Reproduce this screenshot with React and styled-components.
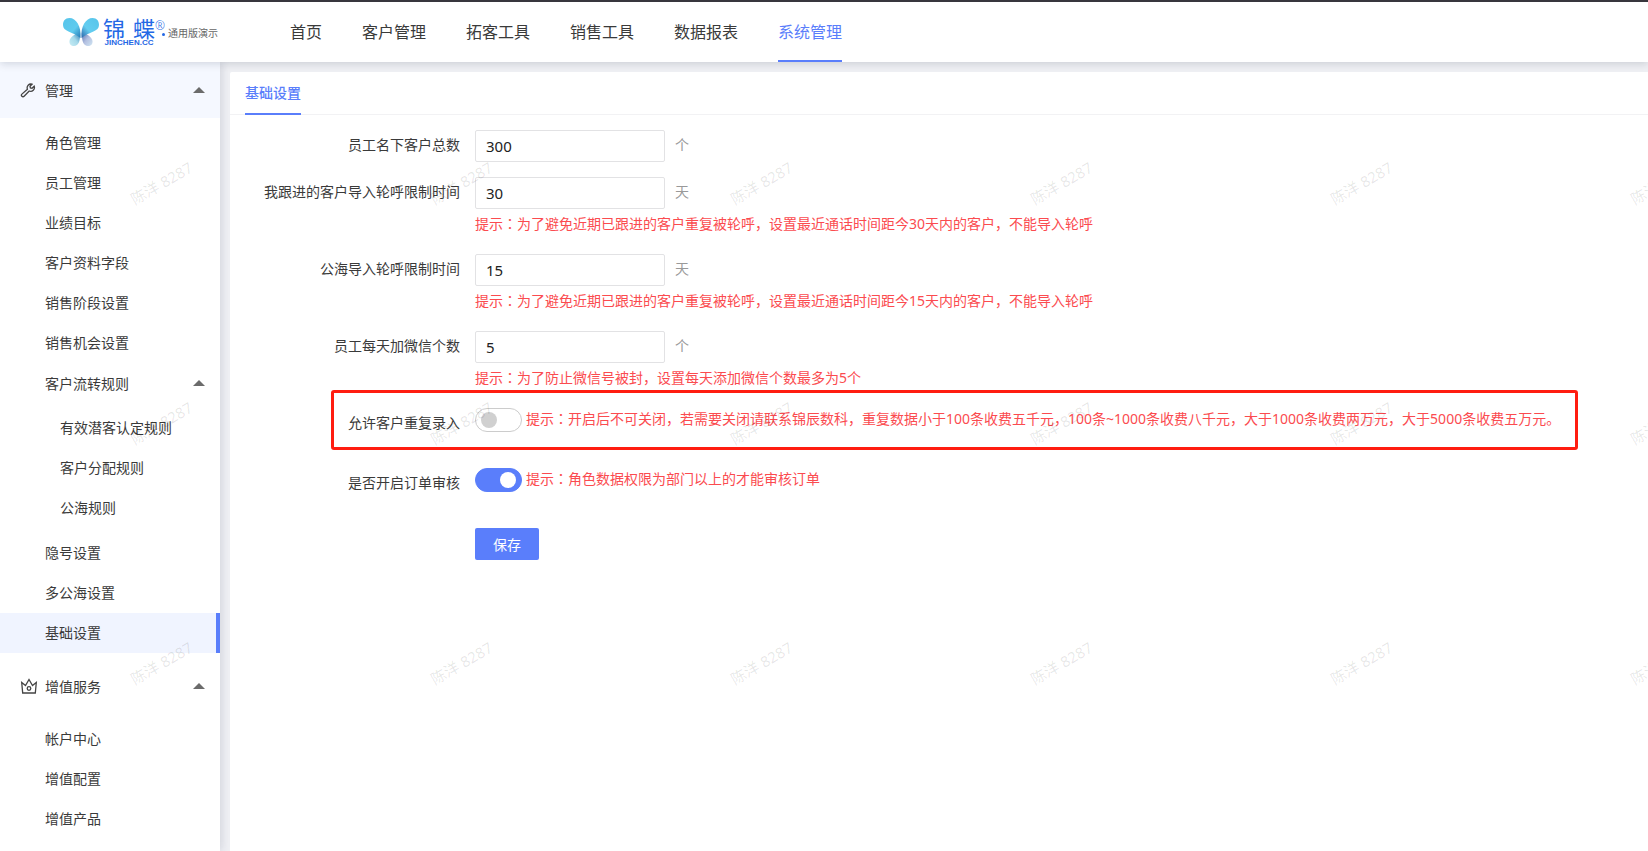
import React, { useState } from "react";
import styled, { createGlobalStyle } from "styled-components";

const menu = ["首页", "客户管理", "拓客工具", "销售工具", "数据报表", "系统管理"];

const flowRules = ["有效潜客认定规则", "客户分配规则", "公海规则"];

const manageTop = [
  "角色管理",
  "员工管理",
  "业绩目标",
  "客户资料字段",
  "销售阶段设置",
  "销售机会设置",
];

const manageBottom = ["隐号设置", "多公海设置", "基础设置"];

const services = ["帐户中心", "增值配置", "增值产品"];

const fields = [
  { id: "total", label: "员工名下客户总数", value: "300", unit: "个" },
  {
    id: "followDays",
    label: "我跟进的客户导入轮呼限制时间",
    value: "30",
    unit: "天",
    tip: "为了避免近期已跟进的客户重复被轮呼，设置最近通话时间距今30天内的客户，不能导入轮呼",
  },
  {
    id: "seaDays",
    label: "公海导入轮呼限制时间",
    value: "15",
    unit: "天",
    tip: "为了避免近期已跟进的客户重复被轮呼，设置最近通话时间距今15天内的客户，不能导入轮呼",
  },
  {
    id: "wechat",
    label: "员工每天加微信个数",
    value: "5",
    unit: "个",
    tip: "为了防止微信号被封，设置每天添加微信个数最多为5个",
  },
];

function Butterfly() {
  return (
    <svg width="36" height="28" viewBox="0 0 36 28" aria-hidden="true">
      <defs>
        <linearGradient id="wing" x1="0" y1="0" x2="1" y2="1">
          <stop offset="0" stopColor="#56c4ea" />
          <stop offset="0.6" stopColor="#5fcbee" />
          <stop offset="1" stopColor="#2277b5" />
        </linearGradient>
        <linearGradient id="wingRight" x1="1" y1="0" x2="0" y2="1">
          <stop offset="0" stopColor="#56c4ea" />
          <stop offset="0.6" stopColor="#63cdf0" />
          <stop offset="1" stopColor="#2a62a8" />
        </linearGradient>
        <linearGradient id="tail" x1="1" y1="0" x2="0" y2="1">
          <stop offset="0" stopColor="#2478b4" />
          <stop offset="0.5" stopColor="#a5d9ea" />
          <stop offset="1" stopColor="#c9edf5" />
        </linearGradient>
        <linearGradient id="tailRight" x1="0" y1="0" x2="1" y2="1">
          <stop offset="0" stopColor="#4a6cae" />
          <stop offset="0.5" stopColor="#b3bfe0" />
          <stop offset="1" stopColor="#d0e6f3" />
        </linearGradient>
      </defs>
      <path d="M17 14C12 16 7 19 6.500 23c-.4 3 1.500 5 4.500 5 4.500 0 6.500-5 6-14z" fill="url(#tail)" />
      <path d="M19 14c5 2 10 5 10.500 9 .4 3-1.500 5-4.500 5-4.500 0-6.500-5-6-14z" fill="url(#tailRight)" />
      <path d="M17.500 20C18.500 8 13 0 6.500 0 2 0 0 3 0 7c0 7 9 6 17.500 13z" fill="url(#wing)" />
      <path d="M18.500 20C17.500 8 23 0 29.500 0 34 0 36 3 36 7c0 7-9 6-17.500 13z" fill="url(#wingRight)" />
    </svg>
  );
}

function Wrench() {
  return (
    <svg
      width="16"
      height="16"
      viewBox="0 0 16 16"
      fill="none"
      stroke="#444"
      strokeWidth="1.3"
      aria-hidden="true"
    >
      <path d="M12 2.200a3.800 3.800 0 0 0-4.600 5L1.900 12.100a1.500 1.500 0 0 0 2.200 2.200L9.200 9a3.800 3.800 0 0 0 5-4.800L12 6.300l-1.600-.4-.4-1.700z" />
    </svg>
  );
}

function Crown() {
  return (
    <svg
      width="18"
      height="16"
      viewBox="0 0 18 16"
      fill="none"
      stroke="#444"
      strokeWidth="1.3"
      aria-hidden="true"
    >
      <path d="M1.700 4.500 2.700 15h12.600l1-10.500-3.800 3L9 1.500l-3.500 6z" />
      <circle cx="9" cy="10.500" r="1.800" />
    </svg>
  );
}

function Group({ icon, title, tinted, children }) {
  return (
    <>
      <GroupTitle type="button" $tinted={tinted}>
        <IconBox>{icon}</IconBox>
        <span>{title}</span>
        <Arrow />
      </GroupTitle>
      <List>{children}</List>
    </>
  );
}

function Items({ names, active }) {
  return names.map((name) => (
    <li key={name}>
      <Item href="#" $active={name === active}>
        {name}
      </Item>
    </li>
  ));
}

function Hint({ children }) {
  return (
    <>
      提示<Colon>：</Colon>
      {children}
    </>
  );
}

export default function App() {
  const [values, setValues] = useState(
    Object.fromEntries(fields.map((f) => [f.id, f.value]))
  );
  const [repeat, setRepeat] = useState(false);
  const [audit, setAudit] = useState(true);

  return (
    <Page>
      <GlobalStyle />
      <Header>
        <Logo href="#">
          <Butterfly />
          <Brand>
            <BrandName>
              <span>锦</span>
              <span>蝶</span>
            </BrandName>
            <BrandSite>JINCHEN.CC</BrandSite>
          </Brand>
          <Mark>
            <span>®</span>
            <Dot />
          </Mark>
          <Edition>通用版演示</Edition>
        </Logo>
        <Nav>
          {menu.map((name) => (
            <NavLink key={name} href="#" $active={name === "系统管理"}>
              {name}
            </NavLink>
          ))}
        </Nav>
      </Header>
      <Body>
        <Sidebar>
          <Group icon={<Wrench />} title="管理" tinted>
            <Items names={manageTop} />
            <li>
              <SubTitle type="button">
                <span>客户流转规则</span>
                <Arrow />
              </SubTitle>
              <SubList>
                <Items names={flowRules} />
              </SubList>
            </li>
            <Items names={manageBottom} active="基础设置" />
          </Group>
          <Group icon={<Crown />} title="增值服务">
            <Items names={services} />
          </Group>
        </Sidebar>
        <Main>
          <Card>
            <Tabs>
              <Tab href="#">基础设置</Tab>
            </Tabs>
            <Form onSubmit={(e) => e.preventDefault()}>
              {fields.map((f) => (
                <Row key={f.id}>
                  <Label htmlFor={f.id}>{f.label}</Label>
                  <div>
                    <Control>
                      <Input
                        id={f.id}
                        value={values[f.id]}
                        onChange={(e) =>
                          setValues({ ...values, [f.id]: e.target.value })
                        }
                      />
                      <Unit>{f.unit}</Unit>
                    </Control>
                    {f.tip && (
                      <Tip>
                        <Hint>{f.tip}</Hint>
                      </Tip>
                    )}
                  </div>
                </Row>
              ))}
              <SwitchRow>
                <Highlight />
                <Label htmlFor="repeat">允许客户重复录入</Label>
                <SwitchLine>
                  <Switch
                    id="repeat"
                    type="checkbox"
                    checked={repeat}
                    onChange={(e) => setRepeat(e.target.checked)}
                  />
                  <SwitchTip>
                    <Hint>
                      开启后不可关闭，若需要关闭请联系锦辰数科，重复数据小于100条收费五千元，100条~1000条收费八千元，大于1000条收费两万元，大于5000条收费五万元。
                    </Hint>
                  </SwitchTip>
                </SwitchLine>
              </SwitchRow>
              <SwitchRow>
                <Label htmlFor="audit">是否开启订单审核</Label>
                <SwitchLine>
                  <Switch
                    id="audit"
                    type="checkbox"
                    checked={audit}
                    onChange={(e) => setAudit(e.target.checked)}
                  />
                  <SwitchTip>
                    <Hint>角色数据权限为部门以上的才能审核订单</Hint>
                  </SwitchTip>
                </SwitchLine>
              </SwitchRow>
              <Row>
                <span />
                <Save type="submit">保存</Save>
              </Row>
            </Form>
          </Card>
        </Main>
      </Body>
      <Watermarks aria-hidden="true">
        {Array.from({ length: 18 }, (_, i) => (
          <Watermark key={i}>陈洋 8287</Watermark>
        ))}
      </Watermarks>
    </Page>
  );
}

const GlobalStyle = createGlobalStyle`
  * {
    box-sizing: border-box;
  }
  body {
    margin: 0;
    background: #eff0f4;
    color: #3a3a3a;
    font-family: "Noto Sans", "Noto Sans CJK SC", sans-serif;
    font-size: 14px;
  }
  a {
    color: inherit;
    text-decoration: none;
  }
  button,
  input {
    margin: 0;
    font: inherit;
    color: inherit;
  }
  ul {
    margin: 0;
    padding: 0;
    list-style: none;
  }
`;

const Page = styled.div`
  position: relative;
  display: flex;
  flex-direction: column;
  min-height: 100vh;
  overflow: hidden;
`;

const Header = styled.header`
  position: relative;
  z-index: 2;
  display: flex;
  height: 62px;
  border-top: 2px solid #38363d;
  background: #fff;
  box-shadow: 0 2px 8px rgba(0, 21, 41, 0.15);
`;

const Logo = styled.a`
  display: flex;
  align-items: center;
  width: 290px;
  padding-left: 63px;
`;

const Brand = styled.span`
  display: flex;
  flex-direction: column;
  width: 52px;
  margin-left: 4px;
  color: #2468e5;
`;

const BrandName = styled.span`
  display: flex;
  justify-content: space-between;
  font-size: 22px;
  line-height: 22px;
`;

const BrandSite = styled.span`
  font-family: "Liberation Sans", sans-serif;
  font-size: 8px;
  font-weight: 700;
  line-height: 8px;
  text-align: center;
`;

const Mark = styled.span`
  display: flex;
  flex-direction: column;
  width: 10px;
  padding-bottom: 10px;
  color: #2468e5;
  font-size: 12px;
  font-weight: 300;
  line-height: 14px;
`;

const Dot = styled.i`
  align-self: flex-end;
  width: 3px;
  height: 3px;
  border-radius: 50%;
  background: currentColor;
`;

const Edition = styled.span`
  margin-left: 3px;
  color: #666;
  font-size: 10px;
  white-space: nowrap;
`;

const Nav = styled.nav`
  display: flex;
  gap: 40px;
`;

const NavLink = styled.a`
  border-bottom: 2px solid ${(p) => (p.$active ? "#5a7efb" : "transparent")};
  color: ${(p) => (p.$active ? "#5a7efb" : "#3a3a3a")};
  font-size: 16px;
  line-height: 60px;
  white-space: nowrap;
`;

const Body = styled.div`
  display: flex;
  flex: 1;
`;

const Sidebar = styled.aside`
  position: relative;
  z-index: 1;
  flex: 0 0 220px;
  background: #fff;
  box-shadow: 2px 0 8px rgba(29, 35, 80, 0.13);
`;

const GroupTitle = styled.button`
  display: flex;
  align-items: center;
  width: 100%;
  height: 56px;
  padding: 0 15px 0 20px;
  border: 0;
  background: ${(p) => (p.$tinted ? "#f5f8ff" : "#fff")};
`;

const IconBox = styled.span`
  display: flex;
  width: 25px;
`;

const Arrow = styled.i`
  margin-left: auto;
  border: 6px solid transparent;
  border-top: 0;
  border-bottom-color: #6b6b6b;
`;

const List = styled.ul`
  padding: 5px 0;
`;

const SubList = styled(List)`
  a {
    padding-left: 60px;
  }
`;

const Item = styled.a`
  display: block;
  padding-left: 45px;
  border-right: 4px solid ${(p) => (p.$active ? "#5a7efb" : "transparent")};
  background: ${(p) => (p.$active ? "#f0f4ff" : "none")};
  line-height: 40px;
`;

const SubTitle = styled.button`
  display: flex;
  align-items: center;
  width: 100%;
  height: 40px;
  padding: 0 15px 0 45px;
  border: 0;
  background: none;
`;

const Main = styled.main`
  display: flex;
  flex: 1;
  min-width: 0;
  padding: 10px 0 0 10px;
`;

const Card = styled.section`
  flex: 1;
  min-width: 0;
  border-radius: 2px 0 0 0;
  background: #fff;
`;

const Tabs = styled.div`
  display: flex;
  height: 43px;
  padding-left: 15px;
  box-shadow: inset 0 -1px #f2f2f4;
`;

const Tab = styled.a`
  border-bottom: 2px solid #5a7efb;
  color: #5a7efb;
  font-weight: 500;
  line-height: 41px;
`;

const Form = styled.form`
  display: flex;
  flex-direction: column;
  gap: 15px;
  padding-top: 15px;
`;

const Row = styled.div`
  display: grid;
  grid-template-columns: 230px 1fr;
  column-gap: 15px;
`;

const SwitchRow = styled(Row)`
  position: relative;
  height: 45px;
`;

const Label = styled.label`
  line-height: 30px;
  text-align: right;
`;

const Control = styled.div`
  display: flex;
  gap: 10px;
`;

const Input = styled.input`
  width: 190px;
  height: 32px;
  padding: 0 10px;
  border: 1px solid #e2e2e4;
  border-radius: 2px;
  background: #fff;
  color: #222;
  font-size: 15px;
  outline: 0;
`;

const Unit = styled.span`
  color: #999;
  line-height: 30px;
`;

const Tip = styled.p`
  margin: 0;
  color: #fb4b4f;
  line-height: 30px;
`;

/* the SC face sets this mark to the left, the JP face centres it */
const Colon = styled.span`
  font-family: "Noto Sans CJK JP", sans-serif;
  line-height: 1;
`;

const SwitchLine = styled.div`
  display: flex;
  gap: 4px;
`;

const Switch = styled.input`
  flex: none;
  display: flex;
  align-items: center;
  justify-content: flex-start;
  width: 47px;
  height: 24px;
  padding: 0 5px;
  border: 1px solid #ccc;
  border-radius: 12px;
  background: #fff;
  appearance: none;

  &::before {
    content: "";
    width: 16px;
    height: 16px;
    border-radius: 50%;
    background: #d0d0d0;
  }

  &:checked {
    justify-content: flex-end;
    border-color: #5a7efb;
    background: #5a7efb;
  }

  &:checked::before {
    background: #fff;
  }
`;

const SwitchTip = styled.span`
  color: #fb4b4f;
  line-height: 22px;
  white-space: nowrap;
`;

const Highlight = styled.div`
  position: absolute;
  top: -18px;
  left: 101px;
  width: 1247px;
  height: 60px;
  border: 3px solid #ff1d10;
  border-radius: 3px;
  pointer-events: none;
`;

const Save = styled.button`
  justify-self: start;
  width: 64px;
  height: 32px;
  border: 0;
  border-radius: 2px;
  background: #5a7efb;
  color: #fff;
`;

const Watermarks = styled.div`
  position: absolute;
  z-index: 3;
  top: 62px;
  left: 11px;
  display: grid;
  grid-template-columns: repeat(6, 300px);
  grid-auto-rows: 240px;
  place-items: center;
  pointer-events: none;
`;

const Watermark = styled.span`
  color: rgba(0, 0, 0, 0.1);
  font-size: 15px;
  transform: rotate(-30deg);
`;
